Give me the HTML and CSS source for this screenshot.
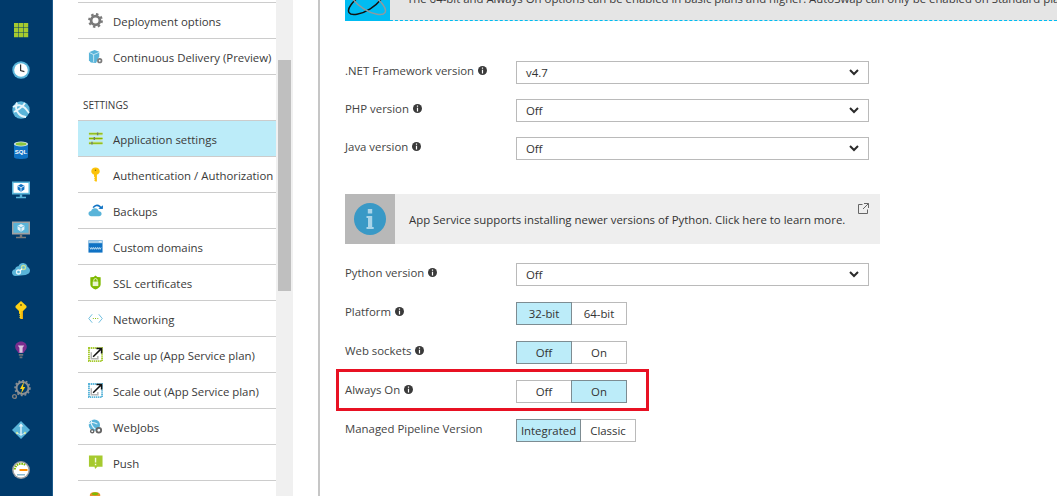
FILE: index.html
```html
<!DOCTYPE html>
<html lang="en">
<head>
<meta charset="utf-8">
<title>Application settings</title>
<link rel="stylesheet" href="styles.css">
</head>
<body>
<nav class="rail">
  <div class="rail-item"><svg width="20" height="20" viewBox="0 0 20 20"><path fill="#a6ca2f" d="M3 3h4.400v4.400H3zM7.900 3h4.400v4.400H7.900zM12.800 3h4.400v4.400h-4.400zM3 7.900h4.400v4.400H3zM7.900 7.900h4.400v4.400H7.900zM12.800 7.900h4.400v4.400h-4.400zM3 12.800h4.400v4.400H3zM7.900 12.800h4.400v4.400H7.900zM12.800 12.800h4.400v4.400h-4.400z"/></svg></div>
  <div class="rail-item"><svg width="20" height="20" viewBox="0 0 20 20"><circle cx="10" cy="10" r="8.700" fill="#59b4d9"/><circle cx="10" cy="10" r="6.800" fill="#fff"/><path d="M9.600 4.600v5.900l3.800 1.100" fill="none" stroke="#333" stroke-width="1.200"/></svg></div>
  <div class="rail-item"><svg width="20" height="20" viewBox="0 0 20 20"><circle cx="10" cy="10" r="8.700" fill="#59b4d9"/><path d="M2 7c4-3 9-2 12 1 2 2 3 4 4 5M6 2.500C4 6 5 11 8 14c2 2 5 3 7 3M14 3c-2 3-5 6-11 9" fill="none" stroke="#e6f5fb" stroke-width="1.900"/></svg></div>
  <div class="rail-item"><svg width="20" height="20" viewBox="0 0 20 20"><path fill="#0f72c4" d="M3 4v13c0 1.200 3 2 7 2s7-.8 7-2V4z"/><ellipse cx="10" cy="4" rx="7" ry="2.600" fill="#d9e8ee"/><ellipse cx="10" cy="4" rx="5.500" ry="1.700" fill="#8cc63f"/><text x="10" y="13.500" class="sql-glyph" text-anchor="middle">SQL</text></svg></div>
  <div class="rail-item"><svg width="20" height="20" viewBox="0 0 20 20"><path fill="#59b4d9" d="M1 1.500h18v13H1z"/><path fill="#fff" d="M2.500 3h15v9.800h-15z"/><path fill="#59b4d9" d="M8.800 14.500h2.400V17H8.800zM5 16.800h10v1.400H5z"/><path fill="#0f72c4" d="M10 4l3.400 1.800v3.800L10 11.700 6.600 9.600V5.800z"/><path d="M7 6l3 1.700L13 6M10 7.700v3.600" stroke="#fff" stroke-width=".8" fill="none"/></svg></div>
  <div class="rail-item"><svg width="20" height="20" viewBox="0 0 20 20"><path fill="#a0a1a2" d="M1 1.500h18v13H1z"/><path fill="#59b4d9" d="M2.500 3h15v9.800h-15z"/><path fill="#7a7a7a" d="M8.800 14.500h2.400V17H8.800zM5 16.800h10v1.400H5z"/><path fill="#e4f3f9" d="M10 4l3.400 1.800v3.800L10 11.700 6.600 9.600V5.800z"/><path d="M7 6l3 1.700L13 6M10 7.700v3.600" stroke="#59b4d9" stroke-width=".8" fill="none"/></svg></div>
  <div class="rail-item"><svg width="20" height="20" viewBox="0 0 20 20"><path fill="#59b4d9" d="M4.500 16C2 16 1 14 1 12.500 1 10.500 2.500 9.300 4 9.200 4.500 7 6 6 7.500 6.200 8.500 3.500 11 2.800 13 3.200c2.500.5 3.500 2.300 3.600 3.800 1.500.6 2.400 2 2.400 3.600 0 2.600-2 4-4.500 4.300z"/><circle cx="7.500" cy="12" r="2" fill="none" stroke="#e6f5fb" stroke-width="1.300"/><circle cx="12.500" cy="7.500" r="2" fill="none" stroke="#c5e29a" stroke-width="1.300"/><path d="M9 10.700l2-1.900" stroke="#fff" stroke-width="1.200"/></svg></div>
  <div class="rail-item"><svg width="20" height="20" viewBox="0 0 20 20"><path fill="#fcd116" d="M10 1l5.500 5v1.500L12 11v8H9.800l-1.600-1.500 1-1-1-1 1-1-1.200-1V11L4.500 7.500V6z"/><path fill="#e8a80c" d="M10.600 11H12v8h-1.400z"/><circle cx="10" cy="5" r="1" fill="#7a6410"/></svg></div>
  <div class="rail-item"><svg width="20" height="20" viewBox="0 0 20 20"><path fill="#7a2d8e" d="M10 1.500c3.300 0 5.800 2.300 5.800 5.200 0 2.200-1.300 3.400-2.300 4.800-.5.700-.6 1-.6 1.500H7.100c0-.5-.1-.8-.6-1.500C5.500 10.100 4.200 8.900 4.200 6.700c0-2.900 2.500-5.200 5.800-5.200z"/><path fill="#d9c5e0" d="M6.800 5.500h6.400l-1.600 2.200v5h-3.200v-5z"/><path fill="#6b7278" d="M7.800 14h4.400v1.700H7.800zM8.600 16.500h2.800v1.700H8.600z"/></svg></div>
  <div class="rail-item"><svg width="20" height="20" viewBox="0 0 20 20"><circle cx="11.500" cy="8" r="6" fill="none" stroke="#8a8f94" stroke-width="2"/><circle cx="11.500" cy="8" r="7.400" fill="none" stroke="#8a8f94" stroke-width="1.600" stroke-dasharray="1.900 1.900"/><path fill="#fcd116" d="M13 1.500l-4 7.500h2.200l-1.200 5 4.200-7h-2.200z"/><circle cx="3.500" cy="16.500" r="1.900" fill="none" stroke="#7f7f7f" stroke-width="1.400"/></svg></div>
  <div class="rail-item"><svg width="20" height="20" viewBox="0 0 20 20"><path fill="#59b4d9" d="M10 1l9 9-9 9-9-9z"/><path fill="#e6f5fb" d="M9.300 4.500h1.400v11H9.300z"/><path fill="#e6f5fb" d="M10 3.500l2.500 3h-5z"/><circle cx="6" cy="13" r="1.200" fill="#c5e29a"/><circle cx="14" cy="13" r="1.200" fill="#c5e29a"/><path d="M6 13l4 2 4-2" stroke="#e6f5fb" stroke-width=".8" fill="none"/></svg></div>
  <div class="rail-item"><svg width="20" height="20" viewBox="0 0 20 20"><circle cx="10" cy="10" r="8.900" fill="#a0a1a2"/><circle cx="10" cy="10" r="7.400" fill="#fff"/><path d="M3.800 9.500A6.300 6.300 0 0 1 14 5" fill="none" stroke="#7fba00" stroke-width="2" stroke-dasharray="1.600 .8"/><path fill="#ff8c00" d="M8.500 9h8v2h-8z"/><path fill="#8bb9cf" d="M6 14h8v1.500H6z"/></svg></div>
</nav>

<section class="blade-menu">
  <div class="menu-row"><svg class="menu-icon" viewBox="0 0 16 16"><circle cx="8" cy="8" r="4.700" fill="none" stroke="#7a7a7a" stroke-width="3"/><circle cx="8" cy="8" r="6.800" fill="none" stroke="#7a7a7a" stroke-width="2.200" stroke-dasharray="2.600 2.700"/></svg><span>Deployment options</span></div>
  <div class="menu-row"><svg class="menu-icon" viewBox="0 0 16 16"><path fill="#59b4d9" d="M1 3.500L7 1l5 2v5l-3.500 7L3 14.500 1 12z"/><path d="M1 3.500L6 6v8M6 6l6-2.500" stroke="#e6f5fb" stroke-width=".8" fill="none"/><circle cx="12.500" cy="12.500" r="2.800" fill="#7a7a7a"/><circle cx="12.500" cy="12.500" r="1" fill="#fff"/></svg><span>Continuous Delivery (Preview)</span></div>
  <div class="menu-heading">SETTINGS</div>
  <div class="menu-row is-active"><svg class="menu-icon" viewBox="0 0 16 16"><path fill="#c6da84" d="M1 1.500h14.500v3H1zM1 6.500h14.500v3H1zM1 11.500h14.500v3H1z"/><path fill="#7fba00" d="M1 2.500h14.500v1H1zM1 7.500h14.500v1H1zM1 12.500h14.500v1H1z"/><path fill="#6f7f6a" d="M9.500 1.500h1.500v3H9.500zM6 6.500h1.500v3H6zM3.500 11.500H5v3H3.500z"/></svg><span>Application settings</span></div>
  <div class="menu-row"><svg class="menu-icon" viewBox="0 0 16 16"><path fill="#fcc30b" d="M8 .5c2.600 0 4.500 1.700 4.500 3.900 0 1.700-1.200 3.100-3 3.700V15.500H8l-1.500-1.300.9-1-.9-1 .9-1-1-1V8.100C4.700 7.500 3.500 6.100 3.500 4.400 3.500 2.200 5.400.5 8 .5z"/><circle cx="8" cy="3.500" r=".8" fill="#8a6d00"/></svg><span>Authentication / Authorization</span></div>
  <div class="menu-row"><svg class="menu-icon" viewBox="0 0 16 16"><path fill="#59b4d9" d="M3.500 14C1.500 14 .5 12.700.5 11.200.5 9.600 1.800 8.400 3.300 8.400 4 6.500 5.500 5.500 7.400 5.600c2.400.1 3.800 1.700 4 3.300 1.700-.2 3.100.9 3.100 2.600 0 1.500-1.100 2.500-2.700 2.500z"/><path d="M5.500 5C7 2.500 10 1.700 12.500 3.500l1.500 2" fill="none" stroke="#0f72c4" stroke-width="1.700"/><path fill="#0f72c4" d="M11 6l4.800.5.200-4z"/></svg><span>Backups</span></div>
  <div class="menu-row"><svg class="menu-icon" viewBox="0 0 16 16"><path fill="#0f72c4" d="M.5 1.500h15v13H.5z"/><path fill="#a9cfe8" d="M.5 1.500h15v3H.5z"/><path fill="#fff" d="M11.500 2.500h3v1h-3z"/><path d="M2 9l1 2 1-2 1 2 1-2 1 2 1-2 1 2 1-2 1 2 1-2 1 2 1-2" fill="none" stroke="#e6f5fb" stroke-width=".8"/></svg><span>Custom domains</span></div>
  <div class="menu-row"><svg class="menu-icon" viewBox="0 0 16 16"><path fill="#7fba00" d="M8 .5l2 1.500 3.500.5v7.500c0 2.500-2.800 4.500-5.500 5.500-2.700-1-5.500-3-5.500-5.500V2.500L6 2z"/><path fill="#e9f5d0" d="M5 7h6v4.800H5z"/><path d="M6.200 7V5.600a1.800 1.800 0 0 1 3.600 0V7" fill="none" stroke="#e9f5d0" stroke-width="1"/></svg><span>SSL certificates</span></div>
  <div class="menu-row"><svg class="menu-icon" viewBox="0 0 16 16"><path d="M4.500 3.500L.8 8l3.700 4.500M11.500 3.500L15.200 8l-3.700 4.500" fill="none" stroke="#59b4d9" stroke-width=".9"/><path d="M5.200 8h.9M7.500 8h1M10 8h.9" stroke="#7fba00" stroke-width="1.300"/></svg><span>Networking</span></div>
  <div class="menu-row"><svg class="menu-icon" viewBox="0 0 16 16"><path fill="none" stroke="#a6ca2f" stroke-width="2" stroke-dasharray="1.500 .7" d="M1 1h14v14H1z"/><path fill="none" stroke="#b5b5b5" stroke-width="1.600" d="M3.500 5.500v7h7v-3"/><path d="M5.500 10.500L14 2M9 1.500h5.500V7" fill="none" stroke="#111" stroke-width="1.600"/></svg><span>Scale up (App Service plan)</span></div>
  <div class="menu-row"><svg class="menu-icon" viewBox="0 0 16 16"><path fill="none" stroke="#59b4d9" stroke-width="2" stroke-dasharray="1.500 .7" d="M1 1h14v14H1z"/><path fill="none" stroke="#b5b5b5" stroke-width="1.600" d="M3.500 5.500v7h7v-3"/><path d="M5.500 10.500L14 2M9 1.500h5.500V7" fill="none" stroke="#111" stroke-width="1.600"/></svg><span>Scale out (App Service plan)</span></div>
  <div class="menu-row"><svg class="menu-icon" viewBox="0 0 16 16"><circle cx="6.800" cy="6.500" r="6" fill="#59b4d9"/><path d="M1 5c3-2 6-1.500 9 .5M4 1.500C3 4 4 8 8 11" fill="none" stroke="#e6f5fb" stroke-width="1.200"/><circle cx="4.500" cy="13" r="1.700" fill="none" stroke="#666" stroke-width="1.500"/><circle cx="11.500" cy="12" r="2.500" fill="none" stroke="#666" stroke-width="2"/></svg><span>WebJobs</span></div>
  <div class="menu-row"><svg class="menu-icon" viewBox="0 0 16 16"><path fill="#a6ca2f" d="M1 .5h14.500v12H10L7.500 15 7 12.500H1z"/><path fill="#f3f9df" d="M7.300 3h1.500v5H7.300zM7.300 9.300h1.500v1.500H7.300z"/></svg><span>Push</span></div>
  <div class="menu-row"><svg class="menu-icon" viewBox="0 0 16 16"><ellipse cx="7.500" cy="4" rx="5.500" ry="3" fill="#e8912d"/><path fill="#e8912d" d="M2 4h11v10H2z"/><ellipse cx="7.500" cy="3" rx="3.500" ry="1.500" fill="#7fba00"/></svg><span>MySQL In App</span></div>
</section>

<div class="menu-track"><div class="menu-thumb"></div></div>

<main class="panel">
  <div class="notice">
    <div class="notice-badge"><svg width="45" height="20" viewBox="0 0 45 20"><ellipse cx="21" cy="2" rx="20" ry="8" transform="rotate(-32 21 2)" fill="none" stroke="#111" stroke-width="1.500"/><ellipse cx="23" cy="2" rx="20" ry="8" transform="rotate(32 23 2)" fill="none" stroke="#8d9aa0" stroke-width="1.500"/></svg></div>
    <div class="notice-text">The 64-bit and Always On options can be enabled in basic plans and higher. AutoSwap can only be enabled on Standard plans.</div>
  </div>

  <div class="form-group first-group">
    <div class="field"><div class="field-label">.NET Framework version<svg class="hint" viewBox="0 0 9 9"><circle cx="4.500" cy="4.500" r="4.500"/><path d="M3.900 1.600h1.200v1.200H3.900zM3.900 3.700h1.200v3.700H3.900z" class="hint-i"/></svg></div><div class="select"><span>v4.7</span><svg class="chev" viewBox="0 0 10 7"><path d="M1 1l4 4 4-4"/></svg></div></div>
    <div class="field"><div class="field-label">PHP version<svg class="hint" viewBox="0 0 9 9"><circle cx="4.500" cy="4.500" r="4.500"/><path d="M3.900 1.600h1.200v1.200H3.900zM3.900 3.700h1.200v3.700H3.900z" class="hint-i"/></svg></div><div class="select"><span>Off</span><svg class="chev" viewBox="0 0 10 7"><path d="M1 1l4 4 4-4"/></svg></div></div>
    <div class="field"><div class="field-label">Java version<svg class="hint" viewBox="0 0 9 9"><circle cx="4.500" cy="4.500" r="4.500"/><path d="M3.900 1.600h1.200v1.200H3.900zM3.900 3.700h1.200v3.700H3.900z" class="hint-i"/></svg></div><div class="select"><span>Off</span><svg class="chev" viewBox="0 0 10 7"><path d="M1 1l4 4 4-4"/></svg></div></div>
  </div>

  <div class="infobox">
    <div class="infobox-badge"><svg width="32" height="32" viewBox="0 0 32 32"><circle cx="16" cy="16" r="16" fill="#3999c6"/><path fill="#a9d4e8" d="M13.800 6h4.400v4.400h-4.400zM12.500 13h5.700v11h1.500v2h-7.200v-2h1.500v-9h-1.500z"/></svg></div>
    <div class="infobox-text">App Service supports installing newer versions of Python. Click here to learn more.</div>
    <svg class="infobox-link" viewBox="0 0 11 11"><path d="M4.500 1.500H.5v9h9v-4M6 .5h4.500V5M10.500.5L5 6" fill="none" stroke="#666" stroke-width="1"/></svg>
  </div>

  <div class="form-group python-group">
    <div class="field"><div class="field-label">Python version<svg class="hint" viewBox="0 0 9 9"><circle cx="4.500" cy="4.500" r="4.500"/><path d="M3.900 1.600h1.200v1.200H3.900zM3.900 3.700h1.200v3.700H3.900z" class="hint-i"/></svg></div><div class="select"><span>Off</span><svg class="chev" viewBox="0 0 10 7"><path d="M1 1l4 4 4-4"/></svg></div></div>
    <div class="field"><div class="field-label">Platform<svg class="hint" viewBox="0 0 9 9"><circle cx="4.500" cy="4.500" r="4.500"/><path d="M3.900 1.600h1.200v1.200H3.900zM3.900 3.700h1.200v3.700H3.900z" class="hint-i"/></svg></div><div class="toggle"><div class="seg is-on">32-bit</div><div class="seg">64-bit</div></div></div>
    <div class="field"><div class="field-label">Web sockets<svg class="hint" viewBox="0 0 9 9"><circle cx="4.500" cy="4.500" r="4.500"/><path d="M3.900 1.600h1.200v1.200H3.900zM3.900 3.700h1.200v3.700H3.900z" class="hint-i"/></svg></div><div class="toggle"><div class="seg is-on">Off</div><div class="seg">On</div></div></div>
    <div class="field"><div class="field-label">Always On<svg class="hint" viewBox="0 0 9 9"><circle cx="4.500" cy="4.500" r="4.500"/><path d="M3.900 1.600h1.200v1.200H3.900zM3.900 3.700h1.200v3.700H3.900z" class="hint-i"/></svg></div><div class="toggle"><div class="seg">Off</div><div class="seg is-on">On</div></div></div>
    <div class="field"><div class="field-label">Managed Pipeline Version</div><div class="toggle"><div class="seg seg-wide is-on">Integrated</div><div class="seg">Classic</div></div></div>
  </div>

  <div class="callout"></div>
</main>
</body>
</html>
```
FILE: styles.css
```css
* { box-sizing: border-box; }
html, body { height: 100%; }
body {
  margin: 0;
  display: flex;
  overflow: hidden;
  background: #fff;
  color: #3a3a3a;
  font-family: "Open Sans", "Liberation Sans", sans-serif;
  font-size: 11.400px;
}

/* left rail */
.rail {
  flex: 0 0 53px;
  padding-top: 10px;
  background: #003a6b;
  border-right: 1px solid #1d5b8c;
}
.rail-item {
  height: 40px;
  display: flex;
  align-items: center;
  justify-content: center;
  padding-right: 10px;
}
.sql-glyph { font: 700 6px "Liberation Sans", sans-serif; fill: #fff; }

/* blade menu */
.blade-menu {
  flex: 0 0 198px;
  min-width: 0;
  margin-left: 25px;
  padding-top: 2px;
  height: 520px;
}
.menu-row {
  height: 36px;
  display: flex;
  align-items: center;
  gap: 10px;
  padding-left: 10px;
  border-bottom: 1px solid #ccc;
  white-space: nowrap;
}
.menu-row span { padding-top: 2px; }
.menu-row:first-child { height: 37px; border-top: 1px solid #ccc; }
.menu-row.is-active { background: #bcecf9; }
.menu-icon { width: 15px; height: 15px; flex: none; }
.menu-heading {
  height: 46px;
  padding: 23px 0 0 5px;
  border-bottom: 1px solid #ccc;
  font-size: 10px;
  line-height: 14px;
}
.menu-track {
  flex: 0 0 17px;
  padding: 60px 2px 0;
  background: #f0f0f0;
}
.menu-thumb { height: 231px; background: #bfbfbf; }

/* main panel */
.panel {
  position: relative;
  flex: 1;
  min-width: 0;
  margin-left: 25px;
  padding-left: 25px;
  border-left: 2px solid #c6c6c6;
  overflow: hidden;
}
.notice {
  display: flex;
  height: 21px;
  background: #e5e5e5;
  border-bottom: 1px dashed #00bcf2;
  white-space: nowrap;
}
.notice-badge { flex: 0 0 45px; height: 21px; background: #00bcf2; }
.notice-badge svg { display: block; }
.notice-text { padding-left: 17px; line-height: 18px; margin-top: -10px; height: 30px; }

.form-group { display: flex; flex-direction: column; }
.first-group { margin-top: 40px; gap: 15px; }
.python-group { margin-top: 19px; gap: 16px; }
.field { display: flex; align-items: center; height: 23px; }
.field-label {
  flex: 0 0 171px;
  display: flex;
  align-items: center;
  gap: 4px;
  padding-bottom: 4px;
  color: #444;
  white-space: nowrap;
}
.hint { width: 9px; height: 9px; fill: #3a3a3a; flex: none; }
.hint-i { fill: #fff; }

.select {
  flex: 0 0 353px;
  height: 23px;
  display: flex;
  align-items: center;
  justify-content: space-between;
  padding: 0 9px;
  border: 1px solid #bababa;
  color: #333;
}
.chev { width: 10px; height: 7px; }
.chev path { fill: none; stroke: #2b2b2b; stroke-width: 2; }

.toggle { display: flex; height: 23px; }
.seg {
  width: 56px;
  display: flex;
  align-items: center;
  justify-content: center;
  border: 1px solid #bababa;
  color: #333;
}
.seg + .seg { margin-left: -1px; }
.seg-wide { width: 65px; }
.seg.is-on {
  position: relative;
  background: #bcecf9;
  border-color: #7d8c92;
}

.infobox {
  position: relative;
  display: flex;
  align-items: center;
  width: 535px;
  height: 50px;
  margin-top: 34px;
  background: #eee;
}
.infobox-badge {
  flex: 0 0 50px;
  height: 50px;
  display: flex;
  align-items: center;
  justify-content: center;
  background: #b8b8b8;
}
.infobox-text { padding-left: 14px; white-space: nowrap; color: #333; }
.infobox-link { position: absolute; top: 9px; right: 11px; width: 11px; height: 11px; }

.callout {
  position: absolute;
  left: 16px;
  top: 369px;
  width: 313px;
  height: 42px;
  border: 3px solid #e81123;
}
```
